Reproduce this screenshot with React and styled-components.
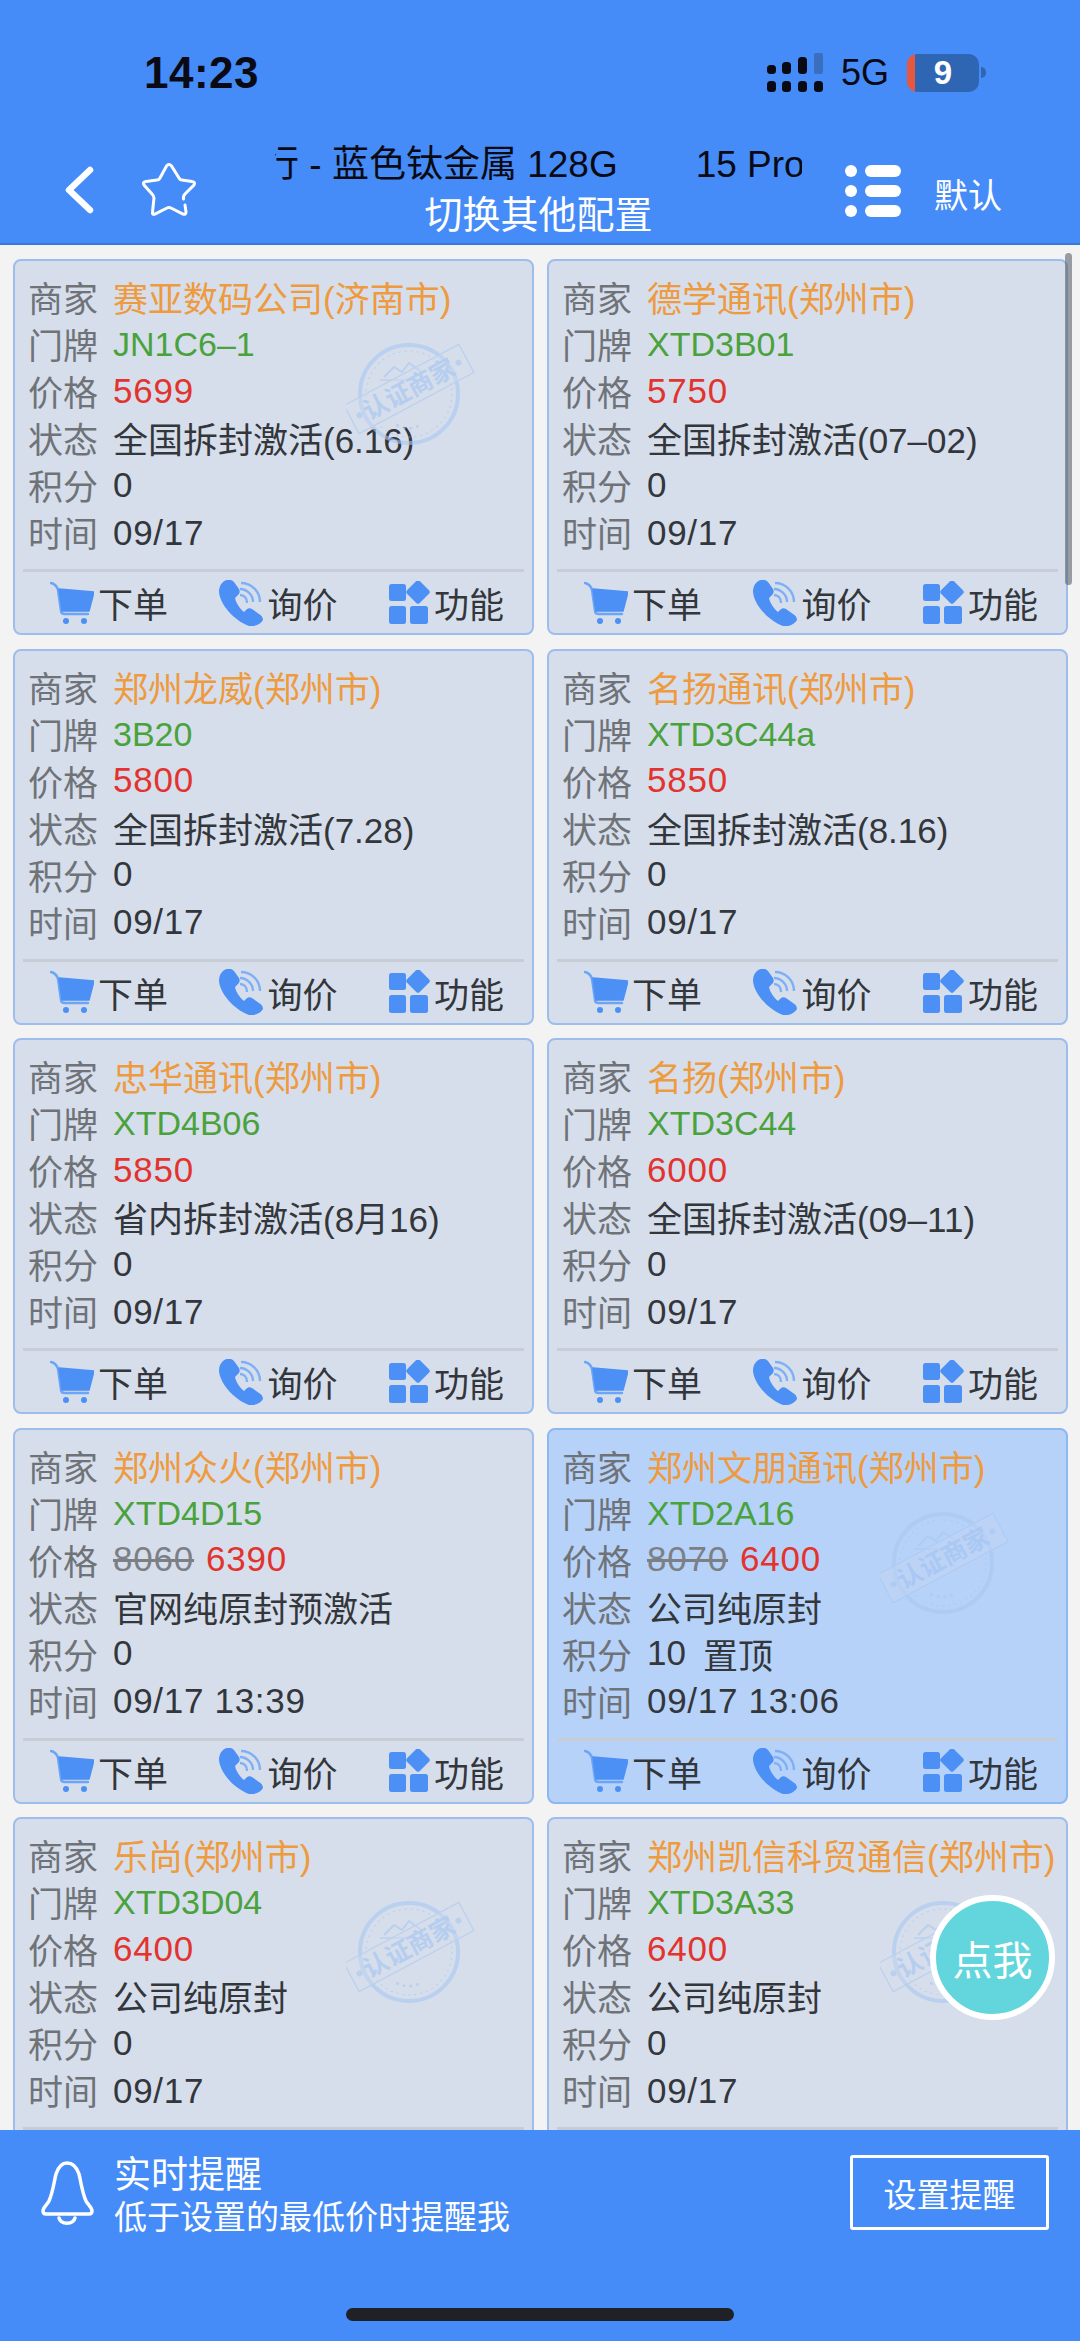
import React from "react";
import styled, { createGlobalStyle } from "styled-components";

const FONT = `"Liberation Sans", "Noto Sans CJK SC", sans-serif`;

const Global = createGlobalStyle`
  html, body { margin: 0; padding: 0; background: #f3f3f3; }
  body { font-family: ${FONT}; }
  * { box-sizing: border-box; }
`;

const Page = styled.div`
  position: relative;
  width: 1080px;
  height: 2341px;
  display: flex;
  flex-direction: column;
  overflow: hidden;
  background: #f3f3f3;
`;

const Header = styled.header`
  height: 245px;
  flex: none;
  background: #468cf8;
  border-bottom: 2px solid #3a78d6;
  display: flex;
  flex-direction: column;
`;

const StatusBar = styled.div`
  height: 53px;
  margin-top: 46px;
  padding-left: 144px;
  display: flex;
  align-items: center;
`;

const Clock = styled.div`
  font-size: 44px;
  font-weight: 700;
  color: #0a0a14;
  letter-spacing: 0.5px;
`;

const StatusRight = styled.div`
  margin-left: auto;
  margin-right: 101px;
  display: flex;
  align-items: center;
`;

const NetLabel = styled.div`
  font-size: 36px;
  color: #0a0a14;
  margin: 0 18px 0 18px;
`;

const Battery = styled.div`
  position: relative;
  width: 72px;
  height: 38px;
  border-radius: 10px;
  background: linear-gradient(90deg, #e5573f 0 8px, #2f66b4 8px);
  color: #fff;
  font-size: 33px;
  font-weight: 700;
  display: flex;
  align-items: center;
  justify-content: center;
  &::after {
    content: "";
    position: absolute;
    right: -7px;
    top: 13px;
    width: 5px;
    height: 11px;
    border-radius: 0 5px 5px 0;
    background: #2f66b4;
  }
`;

const NavBar = styled.div`
  flex: 1;
  display: flex;
  align-items: flex-start;
  padding-top: 42px;
`;

const NavIcons = styled.div`
  width: 275px;
  flex: none;
  padding: 21px 0 0 65px;
  display: flex;
  align-items: center;
  gap: 46px;
`;

const TitleBlock = styled.div`
  width: 527px;
  flex: none;
  display: flex;
  flex-direction: column;
`;

const Marquee = styled.div`
  height: 48px;
  overflow: hidden;
  white-space: nowrap;
  font-size: 37px;
  line-height: 48px;
  color: #0a0a14;
`;

const MarqueeTrack = styled.span`
  display: inline-block;
  margin-left: -13px;
`;

const MarqueeNext = styled.span`
  margin-left: 78px;
`;

const Subtitle = styled.div`
  font-size: 38px;
  line-height: 50px;
  color: #fff;
  text-align: center;
  margin-top: 1px;
`;

const SortBox = styled.div`
  display: flex;
  align-items: center;
  padding: 22px 0 0 43px;
  gap: 33px;
`;

const SortLabel = styled.div`
  font-size: 34px;
  color: #fff;
  margin-top: 6px;
`;

const List = styled.main`
  flex: 1;
  min-height: 0;
  overflow: hidden;
  padding: 14px 12px 0 13px;
  display: grid;
  grid-template-columns: 521px 521px;
  grid-auto-rows: 376px;
  column-gap: 13px;
  row-gap: 13.5px;
`;

const Card = styled.article`
  position: relative;
  height: 376px;
  background: ${(p) => (p.$hot ? "#b7d2f8" : "#d6deeb")};
  border: 2px solid ${(p) => (p.$hot ? "#8cb7f2" : "#9dbdec")};
  border-radius: 8px;
  padding: 12px 8px 0;
  display: flex;
  flex-direction: column;
`;

const Row = styled.div`
  display: flex;
  align-items: center;
  height: 47px;
  padding-left: 5px;
  font-size: 35px;
  white-space: nowrap;
`;

const Label = styled.span`
  width: 70px;
  margin-right: 15px;
  flex: none;
  color: #6f7378;
`;

const Shop = styled.span`
  color: #ee9a3f;
`;

const Door = styled.span`
  font-size: 34px;
  color: #4aa23c;
  margin-top: 2px;
`;

const Price = styled.span`
  color: #e2332e;
  letter-spacing: 0.8px;
`;

const OldPrice = styled.span`
  color: #7c8086;
  letter-spacing: 0.8px;
  text-decoration: line-through;
  margin-right: 12px;
`;

const Plain = styled.span`
  color: #33363a;
`;

const TimeText = styled.span`
  color: #33363a;
  letter-spacing: 0.7px;
  margin-top: 2px;
`;

const Pinned = styled.span`
  color: #33363a;
  margin-left: 17px;
`;

const Divider = styled.div`
  height: 3px;
  background: #c8ccd4;
  margin-top: 14px;
`;

const Actions = styled.div`
  flex: 1;
  display: flex;
  align-items: center;
  justify-content: space-between;
  padding: 0 20px 0 27px;
`;

const Action = styled.div`
  display: flex;
  align-items: center;
  gap: 4px;
  font-size: 35px;
  color: #33363a;
  white-space: nowrap;
`;

const StampBox = styled.div`
  position: absolute;
  right: 56px;
  top: 66px;
  width: 130px;
  height: 130px;
  pointer-events: none;
`;

const Fab = styled.div`
  position: absolute;
  left: 930px;
  top: 1895px;
  width: 125px;
  height: 125px;
  border-radius: 50%;
  background: #62d6dc;
  border: 6px solid #fff;
  color: #fff;
  font-size: 40px;
  display: flex;
  align-items: center;
  justify-content: center;
`;

const Bottom = styled.footer`
  position: relative;
  flex: none;
  height: 211px;
  background: #468cf8;
  padding: 25px 31px 0 41px;
  display: flex;
  align-items: flex-start;
  color: #fff;
`;

const BellWrap = styled.div`
  width: 53px;
  margin-right: 20px;
  padding-top: 5px;
  flex: none;
`;

const AlertText = styled.div`
  flex: 1;
  display: flex;
  flex-direction: column;
`;

const AlertTitle = styled.div`
  font-size: 37px;
  line-height: 42px;
`;

const AlertSub = styled.div`
  font-size: 33px;
  line-height: 42px;
`;

const SetButton = styled.div`
  width: 199px;
  height: 75px;
  border: 3px solid #fff;
  border-radius: 3px;
  font-size: 33px;
  display: flex;
  align-items: center;
  justify-content: center;
`;

const HomeBar = styled.div`
  position: absolute;
  left: 346px;
  top: 178px;
  width: 388px;
  height: 13px;
  border-radius: 7px;
  background: #1f2126;
`;

const ScrollThumb = styled.div`
  position: absolute;
  left: 1065px;
  top: 253px;
  width: 7px;
  height: 332px;
  border-radius: 4px;
  background: rgba(95, 100, 112, 0.62);
`;

const Signal = () => (
  <svg width="56" height="39" viewBox="0 0 56 39">
    <g fill="#0a0a14">
      <rect x="0" y="28" width="9" height="11" rx="3.5" />
      <rect x="0" y="12" width="9" height="9" rx="3.5" />
      <rect x="15" y="28" width="9" height="11" rx="3.5" />
      <rect x="15" y="9" width="9" height="12" rx="3.5" />
      <rect x="31" y="28" width="9" height="11" rx="3.5" />
      <rect x="31" y="4" width="9" height="17" rx="3.5" />
      <rect x="47" y="28" width="9" height="11" rx="3.5" />
    </g>
    <rect x="47" y="0" width="9" height="21" rx="2" fill="#3a6fc0" />
  </svg>
);

const Back = () => (
  <svg width="30" height="52" viewBox="0 0 30 52">
    <path d="M25 6 L4 26 L25 46" fill="none" stroke="#fff" strokeWidth="6.5" strokeLinecap="round" strokeLinejoin="round" />
  </svg>
);

const Star = () => (
  <svg width="56" height="56" viewBox="0 0 56 56">
    <path
      d="M44 43 L45 50 Q45 53 42 52 L30 46 Q28 45 26 46 L14 52 Q11 53 11.500 50 L13 36 Q13 34 11 32 L3 23 Q1 20 5 19.500 L16 18 Q18 18 19 16 L25.500 4 Q28 1 30.500 4 L38 16 Q39 18 41 18 L51 19.500 Q55 20 53 23 L44 32 Q42 34 42.500 37"
      fill="none"
      stroke="#fff"
      strokeWidth="3"
      strokeLinecap="round"
    />
  </svg>
);

const ListIcon = () => (
  <svg width="56" height="52" viewBox="0 0 56 52">
    <g fill="#fff">
      <rect x="0" y="0" width="12" height="12" rx="6" />
      <rect x="20" y="0" width="36" height="12" rx="6" />
      <rect x="0" y="20" width="12" height="12" rx="6" />
      <rect x="20" y="20" width="36" height="12" rx="6" />
      <rect x="0" y="40" width="12" height="12" rx="6" />
      <rect x="20" y="40" width="36" height="12" rx="6" />
    </g>
  </svg>
);

const Cart = () => (
  <svg width="44" height="44" viewBox="0 0 44 44">
    <path d="M1 2 C5 3 7 5 8 9 L11 30 C11 32 13 33 15 33 L38 33" fill="none" stroke="#6aa5f7" strokeWidth="2.4" strokeLinecap="round" />
    <path d="M9 8 L44 11 L39 30 L12 30 Z" fill="#4d90f5" stroke="#4d90f5" strokeWidth="1.5" strokeLinejoin="round" />
    <circle cx="16" cy="40" r="3" fill="#4d90f5" />
    <circle cx="34" cy="40" r="3" fill="#4d90f5" />
  </svg>
);

const Phone = () => (
  <svg width="44" height="46" viewBox="0 0 44 46">
    <path
      d="M8 0 C3 1 0 6 0 12 C1 24 14 40 30 46 C36 47 42 44 44 40 C44 37 42 35 40 34 L33 29 C31 28 29 28 27 30 L25 32 C21 29 17 23 16 18 L19 15 C21 13 21 11 20 9 L15 2 C13 0 10 -1 8 0 Z"
      fill="#4d90f5"
    />
    <path d="M21 9 C28 9 34 15 34 22" fill="none" stroke="#7fb0f6" strokeWidth="2.4" />
    <path d="M22 3 C32 3 41 11 41 22" fill="none" stroke="#7fb0f6" strokeWidth="2.4" />
    <path d="M21 15 C25 15 28 18 28 23" fill="none" stroke="#7fb0f6" strokeWidth="2.4" />
  </svg>
);

const Apps = () => (
  <svg width="41" height="44" viewBox="0 0 41 44">
    <g fill="#4d90f5">
      <rect x="0" y="3" width="17" height="17" rx="2.5" />
      <rect x="0" y="25" width="17" height="18" rx="2.5" />
      <rect x="21" y="25" width="18" height="18" rx="2.5" />
      <rect x="20" y="2" width="18" height="18" rx="2.5" transform="rotate(45 29 11)" />
    </g>
  </svg>
);

const Bell = () => (
  <svg width="53" height="66" viewBox="0 0 53 66">
    <path
      d="M26 3 C20 3 17 8 15 14 C13 22 12 32 8 41 C6 45 2 47 2 51 C2 53 3 54 5 54 L48 54 C50 54 51 53 51 51 C51 47 47 45 45 41 C41 32 40 22 38 14 C36 8 32 3 26 3 Z"
      fill="none"
      stroke="#fff"
      strokeWidth="3.5"
      strokeLinejoin="round"
    />
    <path d="M18 58 C20 65 32 65 34 58" fill="none" stroke="#fff" strokeWidth="3.5" strokeLinecap="round" />
  </svg>
);

const Stamp = () => (
  <svg width="130" height="130" viewBox="0 0 130 130" opacity="0.6">
    <g fill="none" stroke="#a9c8f2">
      <circle cx="63" cy="67" r="49" strokeWidth="4" />
      <circle cx="63" cy="67" r="43" strokeWidth="1.2" strokeDasharray="2 4" />
      <path d="M38 50 l10 -10 l8 5 l7 -9 l14 10" strokeWidth="2" />
      <path d="M34 53 h38" strokeWidth="1.5" />
      <path d="M50 98 l12 4 l14 -4" strokeWidth="2.5" strokeDasharray="3 4" />
    </g>
    <g transform="rotate(-28 63 62)">
      <rect x="-2" y="46" width="130" height="32" fill="#d6deeb" fillOpacity="0.3" stroke="#a9c8f2" strokeWidth="1.2" />
      <circle cx="7" cy="62" r="3" fill="#a9c8f2" />
      <circle cx="119" cy="62" r="3" fill="#a9c8f2" />
      <text x="63" y="71" textAnchor="middle" fontSize="25" fontWeight="700" fill="#a0c2f2" fontFamily={FONT}>
        认证商家
      </text>
    </g>
  </svg>
);

const cards = [
  { shop: "赛亚数码公司(济南市)", door: "JN1C6–1", price: "5699", state: "全国拆封激活(6.16)", stamp: true },
  { shop: "德学通讯(郑州市)", door: "XTD3B01", price: "5750", state: "全国拆封激活(07–02)" },
  { shop: "郑州龙威(郑州市)", door: "3B20", price: "5800", state: "全国拆封激活(7.28)" },
  { shop: "名扬通讯(郑州市)", door: "XTD3C44a", price: "5850", state: "全国拆封激活(8.16)" },
  { shop: "忠华通讯(郑州市)", door: "XTD4B06", price: "5850", state: "省内拆封激活(8月16)" },
  { shop: "名扬(郑州市)", door: "XTD3C44", price: "6000", state: "全国拆封激活(09–11)" },
  { shop: "郑州众火(郑州市)", door: "XTD4D15", old: "8060", price: "6390", state: "官网纯原封预激活", time: "09/17 13:39" },
  { shop: "郑州文朋通讯(郑州市)", door: "XTD2A16", old: "8070", price: "6400", state: "公司纯原封", score: "10", pinned: true, time: "09/17 13:06", hot: true, stamp: true },
  { shop: "乐尚(郑州市)", door: "XTD3D04", price: "6400", state: "公司纯原封", stamp: true },
  { shop: "郑州凯信科贸通信(郑州市)", door: "XTD3A33", price: "6400", state: "公司纯原封", stamp: true },
];

const MerchantCard = ({ c }) => (
  <Card $hot={c.hot}>
    {c.stamp && (
      <StampBox>
        <Stamp />
      </StampBox>
    )}
    <Row><Label>商家</Label><Shop>{c.shop}</Shop></Row>
    <Row><Label>门牌</Label><Door>{c.door}</Door></Row>
    <Row>
      <Label>价格</Label>
      {c.old && <OldPrice>{c.old}</OldPrice>}
      <Price>{c.price}</Price>
    </Row>
    <Row><Label>状态</Label><Plain>{c.state}</Plain></Row>
    <Row>
      <Label>积分</Label>
      <Plain>{c.score || "0"}</Plain>
      {c.pinned && <Pinned>置顶</Pinned>}
    </Row>
    <Row><Label>时间</Label><TimeText>{c.time || "09/17"}</TimeText></Row>
    <Divider />
    <Actions>
      <Action><Cart />下单</Action>
      <Action><Phone />询价</Action>
      <Action><Apps />功能</Action>
    </Actions>
  </Card>
);

export default function App() {
  return (
    <Page>
      <Global />
      <Header>
        <StatusBar>
          <Clock>14:23</Clock>
          <StatusRight>
            <Signal />
            <NetLabel>5G</NetLabel>
            <Battery>9</Battery>
          </StatusRight>
        </StatusBar>
        <NavBar>
          <NavIcons>
            <Back />
            <Star />
          </NavIcons>
          <TitleBlock>
            <Marquee>
              <MarqueeTrack>
                行 - 蓝色钛金属 128G<MarqueeNext>15 Pro</MarqueeNext>
              </MarqueeTrack>
            </Marquee>
            <Subtitle>切换其他配置</Subtitle>
          </TitleBlock>
          <SortBox>
            <ListIcon />
            <SortLabel>默认</SortLabel>
          </SortBox>
        </NavBar>
      </Header>
      <List>
        {cards.map((c) => (
          <MerchantCard key={c.shop} c={c} />
        ))}
      </List>
      <Bottom>
        <BellWrap>
          <Bell />
        </BellWrap>
        <AlertText>
          <AlertTitle>实时提醒</AlertTitle>
          <AlertSub>低于设置的最低价时提醒我</AlertSub>
        </AlertText>
        <SetButton>设置提醒</SetButton>
        <HomeBar />
      </Bottom>
      <ScrollThumb />
      <Fab>点我</Fab>
    </Page>
  );
}
